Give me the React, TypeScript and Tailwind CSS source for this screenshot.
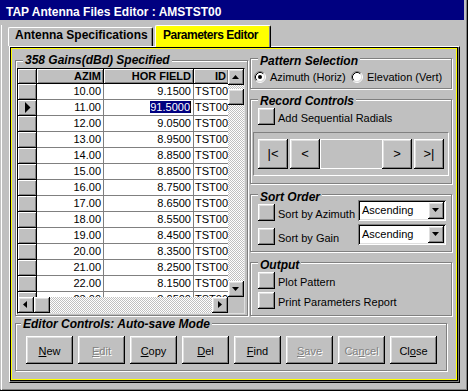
import type { ReactNode } from 'react';

const raised =
  'bg-[#c0c0c0] shadow-[inset_-1px_-1px_#000,inset_1px_1px_#fff,inset_-2px_-2px_#808080,inset_2px_2px_#dfdfdf]';
const cell3d = 'bg-[#c0c0c0] shadow-[inset_1px_1px_#fff,inset_-1px_-1px_#808080]';
const sunken = 'shadow-[inset_1px_1px_#808080,inset_-1px_-1px_#fff,inset_2px_2px_#000,inset_-2px_-2px_#dfdfdf]';
const track = 'bg-[image:repeating-conic-gradient(#c0c0c0_0%_25%,#fff_0%_50%)] bg-[length:2px_2px]';

const rows = [
  ['10.00', '9.1500'],
  ['11.00', '91.5000'],
  ['12.00', '9.0500'],
  ['13.00', '8.9500'],
  ['14.00', '8.8500'],
  ['15.00', '8.8500'],
  ['16.00', '8.7500'],
  ['17.00', '8.6500'],
  ['18.00', '8.5500'],
  ['19.00', '8.4500'],
  ['20.00', '8.3500'],
  ['21.00', '8.2500'],
  ['22.00', '8.1500'],
  ['23.00', '8.0500']
];

const arrows = {
  up: '4,10 11,10 7.5,6',
  down: '4,6 11,6 7.5,10',
  left: '9,4 9,11 5,7.5',
  right: '6,4 6,11 10,7.5'
};

function Arrow({ dir }: { dir: keyof typeof arrows }) {
  return (
    <svg width="16" height="16" viewBox="0 0 16 16" className="block">
      <polygon points={arrows[dir]} fill="#000" />
    </svg>
  );
}

function ScrollButton({ dir }: { dir: keyof typeof arrows }) {
  return (
    <div className={`h-[16px] w-[16px] shrink-0 ${raised}`}>
      <Arrow dir={dir} />
    </div>
  );
}

function Radio({ checked }: { checked?: boolean }) {
  return (
    <svg width="12" height="12" viewBox="0 0 12 12" className="block shrink-0">
      <circle cx="6" cy="6" r="4.5" fill="#fff" />
      <path d="M2.11 9.89 A5.5 5.5 0 0 1 9.89 2.11" stroke="#808080" fill="none" />
      <path d="M9.89 2.11 A5.5 5.5 0 0 1 2.11 9.89" stroke="#fff" fill="none" />
      <path d="M2.82 9.18 A4.5 4.5 0 0 1 9.18 2.82" stroke="#000" fill="none" />
      <path d="M9.18 2.82 A4.5 4.5 0 0 1 2.82 9.18" stroke="#dfdfdf" fill="none" />
      {checked ? <circle cx="6" cy="6" r="2" fill="#000" /> : null}
    </svg>
  );
}

function SquareButton() {
  return <div className={`h-[17px] w-[17px] shrink-0 ${raised}`} />;
}

function CheckRow({ label, className = '' }: { label: string; className?: string }) {
  return (
    <div className={`ml-[7px] flex items-end gap-[3px] ${className}`}>
      <SquareButton />
      <span className="leading-[13px]">{label}</span>
    </div>
  );
}

function Combo() {
  return (
    <div className={`ml-auto flex h-[21px] w-[88px] items-center bg-white pl-[4px] pr-[2px] ${sunken}`}>
      <span className="flex-1 leading-[13px]">Ascending</span>
      <div className={`h-[17px] w-[16px] ${raised}`}>
        <Arrow dir="down" />
      </div>
    </div>
  );
}

function GroupBox({
  title,
  titleClass,
  className,
  children
}: {
  title: string;
  titleClass: string;
  className: string;
  children: ReactNode;
}) {
  return (
    <div className={`shrink-0 border border-[#808080] shadow-[inset_1px_1px_#fff,1px_1px_#fff] ${className}`}>
      <div className={`w-fit bg-[#c0c0c0] px-[2px] text-[12px] leading-[12px] font-bold italic ${titleClass}`}>
        {title}
      </div>
      {children}
    </div>
  );
}

function NavButton({ label, className = '' }: { label: string; className?: string }) {
  return (
    <div className={`flex h-[30px] w-[30px] shrink-0 items-center justify-center text-[13px] ${raised} ${className}`}>
      {label}
    </div>
  );
}

function ActionButton({ pre = '', hot, post, disabled }: { pre?: string; hot: string; post: string; disabled?: boolean }) {
  return (
    <div
      className={`flex h-[28px] w-[47px] items-center justify-center pt-[2px] text-[11px] ${raised} ${
        disabled ? 'text-[#808080] [text-shadow:1px_1px_0_#fff]' : 'text-black'
      }`}
    >
      <span>
        {pre}
        <span className="underline">{hot}</span>
        {post}
      </span>
    </div>
  );
}

function GainsGrid() {
  return (
    <div className="mt-[2px] ml-px w-[228px] border border-black border-r-[#dfdfdf] border-b-[#dfdfdf] bg-white">
      <div className="flex">
        <div className="h-[228px] w-[210px] overflow-hidden">
          <div className="flex h-[15px] text-[11px] leading-[14px] font-bold">
            <div className={`w-[19px] border-r border-b border-black ${cell3d}`} />
            <div className={`w-[67px] border-r border-b border-black pr-[2px] text-right ${cell3d}`}>AZIM</div>
            <div className={`w-[90px] border-r border-b border-black pr-[2px] text-right ${cell3d}`}>HOR FIELD</div>
            <div className={`w-[34px] border-b border-black pr-[2px] text-right ${cell3d}`}>ID</div>
          </div>
          {rows.map(([azim, field], i) => (
            <div key={azim} className="flex h-[16px] text-[11px] leading-[15px]">
              <div className={`flex w-[19px] items-center justify-center border-r border-b border-black pl-[2px] ${cell3d}`}>
                {i === 1 ? (
                  <svg width="6" height="11" viewBox="0 0 6 11" className="block">
                    <polygon points="0,0 5.5,5.5 0,11" fill="#000" />
                  </svg>
                ) : null}
              </div>
              <div className="w-[67px] border-r border-b border-[#808080] pr-[2px] text-right">{azim}</div>
              <div className="w-[90px] border-r border-b border-[#808080] pr-[2px] text-right">
                {i === 1 ? <span className="border-r border-black bg-[#000080] text-white">{field}</span> : field}
              </div>
              <div className="w-[34px] overflow-hidden border-b border-[#808080] pl-px whitespace-nowrap">TST00</div>
            </div>
          ))}
        </div>
        <div className={`flex h-[228px] w-[16px] flex-col ${track}`}>
          <ScrollButton dir="up" />
          <div className={`mt-[4px] h-[16px] w-[16px] ${raised}`} />
          <div className="flex-1" />
          <ScrollButton dir="down" />
        </div>
      </div>
      <div className="flex h-[16px]">
        <div className={`flex w-[210px] ${track}`}>
          <ScrollButton dir="left" />
          <div className={`h-[16px] w-[16px] ${raised}`} />
          <div className="flex-1" />
          <ScrollButton dir="right" />
        </div>
        <div className="w-[16px] bg-[#c0c0c0]" />
      </div>
    </div>
  );
}

export default function App() {
  return (
    <div className="h-[391px] w-[468px] overflow-hidden border-r border-b border-black bg-[#c0c0c0] font-['Liberation_Sans',Arial,sans-serif] text-black">
      <div className="h-full border-r border-b border-[#808080]">
        <div className="h-[20px] w-[464px] bg-[#000080] pt-[5px] pl-[6px] text-[12px] leading-[14px] font-bold text-white">
          TAP Antenna Files Editor : AMSTST00
        </div>

        <div className="ml-px h-[368px] border-l border-white">
          <div className="mt-[5px] flex h-[21px] items-end pl-[6px] text-[12px] font-bold">
            <div className="h-[19px] w-[145px] rounded-tl-[2px] rounded-tr-[2px] border-t border-l border-white border-r border-r-black pl-[6px] leading-[15px] shadow-[inset_-1px_0_#808080]">
              Antenna Specifications
            </div>
            <div className="relative z-10 ml-[2px] -mb-px h-[22px] w-[116px] rounded-tl-[2px] rounded-tr-[2px] border-t border-l border-white border-r border-r-black bg-[#ffff00] pt-[2px] pl-[7px] leading-[15px] tracking-[-0.5px] shadow-[inset_-1px_0_#808080]">
              Parameters Editor
            </div>
          </div>

          <div className="ml-[7px] h-[337px] w-[451px] border border-t-white border-l-white border-r-black border-b-black">
            <div className="h-full border-r border-b border-[#808080]">
              <div className="h-full border border-black">
                <div className="h-full border border-[#ffff00] text-[11px]">
                  <div className="flex items-start">
                    <GroupBox
                      title="358 Gains(dBd) Specified"
                      titleClass="-mt-[7px] ml-[7px]"
                      className="mt-[11px] ml-[3px] h-[256px] w-[233px]"
                    >
                      <GainsGrid />
                    </GroupBox>

                    <div className="mt-[9px] ml-[2px] flex w-[202px] flex-col gap-[10px]">
                      <GroupBox title="Pattern Selection" titleClass="-mt-[4px] ml-[7px]" className="h-[31px]">
                        <div className="mt-[4px] flex h-[12px] items-center">
                          <div className="ml-[3px] flex w-[97px] items-center gap-[4px]">
                            <Radio checked />
                            <span className="leading-[13px]">Azimuth (Horiz)</span>
                          </div>
                          <div className="flex items-center gap-[4px]">
                            <Radio />
                            <span className="leading-[13px]">Elevation (Vert)</span>
                          </div>
                        </div>
                      </GroupBox>

                      <GroupBox title="Record Controls" titleClass="-mt-[5px] ml-[7px]" className="h-[85px]">
                        <CheckRow label="Add Sequential Radials" className="mt-px" />
                        <div className="mx-[2px] mt-[7px] flex h-[44px] border border-[#808080] border-r-white border-b-white pt-[6px] pl-[4px]">
                          <NavButton label="|<" />
                          <NavButton label="<" className="ml-[2px]" />
                          <div className="h-[30px] w-[62px] border-y border-l border-white" />
                          <NavButton label=">" />
                          <NavButton label=">|" className="ml-[2px]" />
                        </div>
                      </GroupBox>

                      <GroupBox title="Sort Order" titleClass="-mt-[4px] ml-[7px]" className="h-[58px]">
                        <div className="-mt-[3px] flex flex-col gap-[3px] pr-[5px]">
                          <div className="flex h-[21px] items-end">
                            <CheckRow label="Sort by Azimuth" />
                            <Combo />
                          </div>
                          <div className="flex h-[21px] items-end">
                            <CheckRow label="Sort by Gain" />
                            <Combo />
                          </div>
                        </div>
                      </GroupBox>

                      <GroupBox title="Output" titleClass="-mt-[4px] ml-[7px]" className="h-[54px]">
                        <div className="mt-px flex flex-col gap-[3px]">
                          <CheckRow label="Plot Pattern" />
                          <CheckRow label="Print Parameters Report" />
                        </div>
                      </GroupBox>
                    </div>
                  </div>

                  <GroupBox
                    title="Editor Controls: Auto-save Mode"
                    titleClass="-mt-[6px] ml-[5px]"
                    className="mt-[7px] ml-[3px] h-[48px] w-[432px]"
                  >
                    <div className="mt-[6px] ml-[10px] flex gap-[5px]">
                      <ActionButton hot="N" post="ew" />
                      <ActionButton hot="E" post="dit" disabled />
                      <ActionButton hot="C" post="opy" />
                      <ActionButton hot="D" post="el" />
                      <ActionButton hot="F" post="ind" />
                      <ActionButton hot="S" post="ave" disabled />
                      <ActionButton pre="Ca" hot="n" post="cel" disabled />
                      <ActionButton pre="Cl" hot="o" post="se" />
                    </div>
                  </GroupBox>
                </div>
              </div>
            </div>
          </div>
        </div>
      </div>
    </div>
  );
}
